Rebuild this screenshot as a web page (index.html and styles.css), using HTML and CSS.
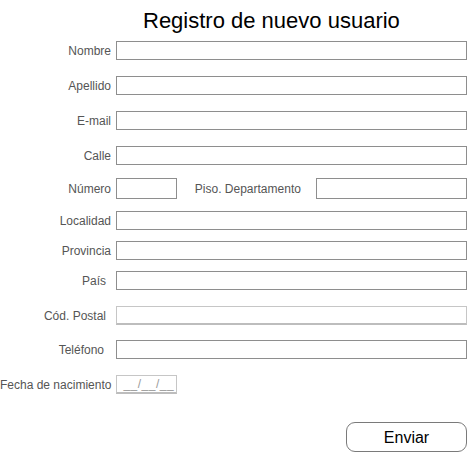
FILE: index.html
```html
<!DOCTYPE html>
<html lang="es">
<head>
<meta charset="utf-8">
<title>Registro de nuevo usuario</title>
<link rel="stylesheet" href="styles.css">
</head>
<body>
<div class="page">
  <h1 class="title">Registro de nuevo usuario</h1>
  <form class="form">
    <div class="row h35"><label class="lbl">Nombre</label><div class="field"></div></div>
    <div class="row h35"><label class="lbl">Apellido</label><div class="field"></div></div>
    <div class="row h35"><label class="lbl">E-mail</label><div class="field"></div></div>
    <div class="row h32"><label class="lbl">Calle</label><div class="field"></div></div>
    <div class="row h33">
      <label class="lbl">Número</label><div class="field small tall"></div>
      <label class="lbl-mid">Piso. Departamento</label><div class="field mid tall"></div>
    </div>
    <div class="row h30"><label class="lbl">Localidad</label><div class="field"></div></div>
    <div class="row h30"><label class="lbl">Provincia</label><div class="field"></div></div>
    <div class="row h35"><label class="lbl pad">País</label><div class="field"></div></div>
    <div class="row h34"><label class="lbl pad">Cód. Postal</label><div class="field light"></div></div>
    <div class="row h35"><label class="lbl pad2">Teléfono</label><div class="field"></div></div>
    <div class="row h47"><label class="lbl">Fecha de nacimiento</label><div class="field small light date">__/__/__</div></div>
    <div class="actions"><button type="button" class="btn">Enviar</button></div>
  </form>
</div>
</body>
</html>
```

FILE: styles.css
```css
html, body {
  margin: 0;
  padding: 0;
  background: #ffffff;
}
body {
  font-family: "Liberation Sans", Arial, sans-serif;
  width: 467px;
  height: 452px;
  overflow: hidden;
}
.page {
  display: flex;
  flex-direction: column;
}
.title {
  margin: 8px 0 0 0;
  padding-left: 143px;
  font-size: 22px;
  font-weight: normal;
  line-height: 25px;
  color: #000;
  white-space: nowrap;
}
.form {
  margin-top: 8px;
  display: flex;
  flex-direction: column;
}
.row {
  display: flex;
  align-items: flex-start;
}
.h30 { height: 30px; }
.h32 { height: 32px; }
.h33 { height: 33px; }
.h34 { height: 34px; }
.h35 { height: 35px; }
.h47 { height: 47px; }
.lbl {
  flex: 0 0 116px;
  box-sizing: border-box;
  padding-right: 5px;
  padding-top: 1px;
  text-align: right;
  font-size: 12px;
  line-height: 19px;
  color: #555;
  white-space: nowrap;
  display: flex;
  justify-content: flex-end;
}
.lbl.pad { padding-right: 10px; }
.lbl.pad2 { padding-right: 12px; }
.field {
  box-sizing: border-box;
  width: 351px;
  height: 19px;
  border: 1px solid #8e8e8e;
  background: #fff;
}
.field.small { width: 61px; }
.field.mid { width: 151px; }
.field.tall { height: 21px; }
.h33 .lbl { line-height: 21px; }
.lbl-mid {
  margin-left: 18px;
  width: 122px;
  padding-top: 1px;
  font-size: 12px;
  line-height: 21px;
  color: #555;
  white-space: nowrap;
}
.field.light {
  border-color: #c6c6c6;
  border-bottom: 2px solid #bdbdbd;
}
.field.date {
  font-size: 12px;
  line-height: 16px;
  color: #9a9a9a;
  padding-left: 6px;
  letter-spacing: 0.5px;
}
.actions {
  display: flex;
  justify-content: flex-end;
}
.btn {
  box-sizing: border-box;
  width: 121px;
  height: 30px;
  margin: 0;
  border: 1px solid #7a7a7a;
  border-radius: 9px;
  background: #fff;
  font-family: "Liberation Sans", Arial, sans-serif;
  font-size: 16px;
  color: #000;
  padding: 1px 0 0 0;
}
```
